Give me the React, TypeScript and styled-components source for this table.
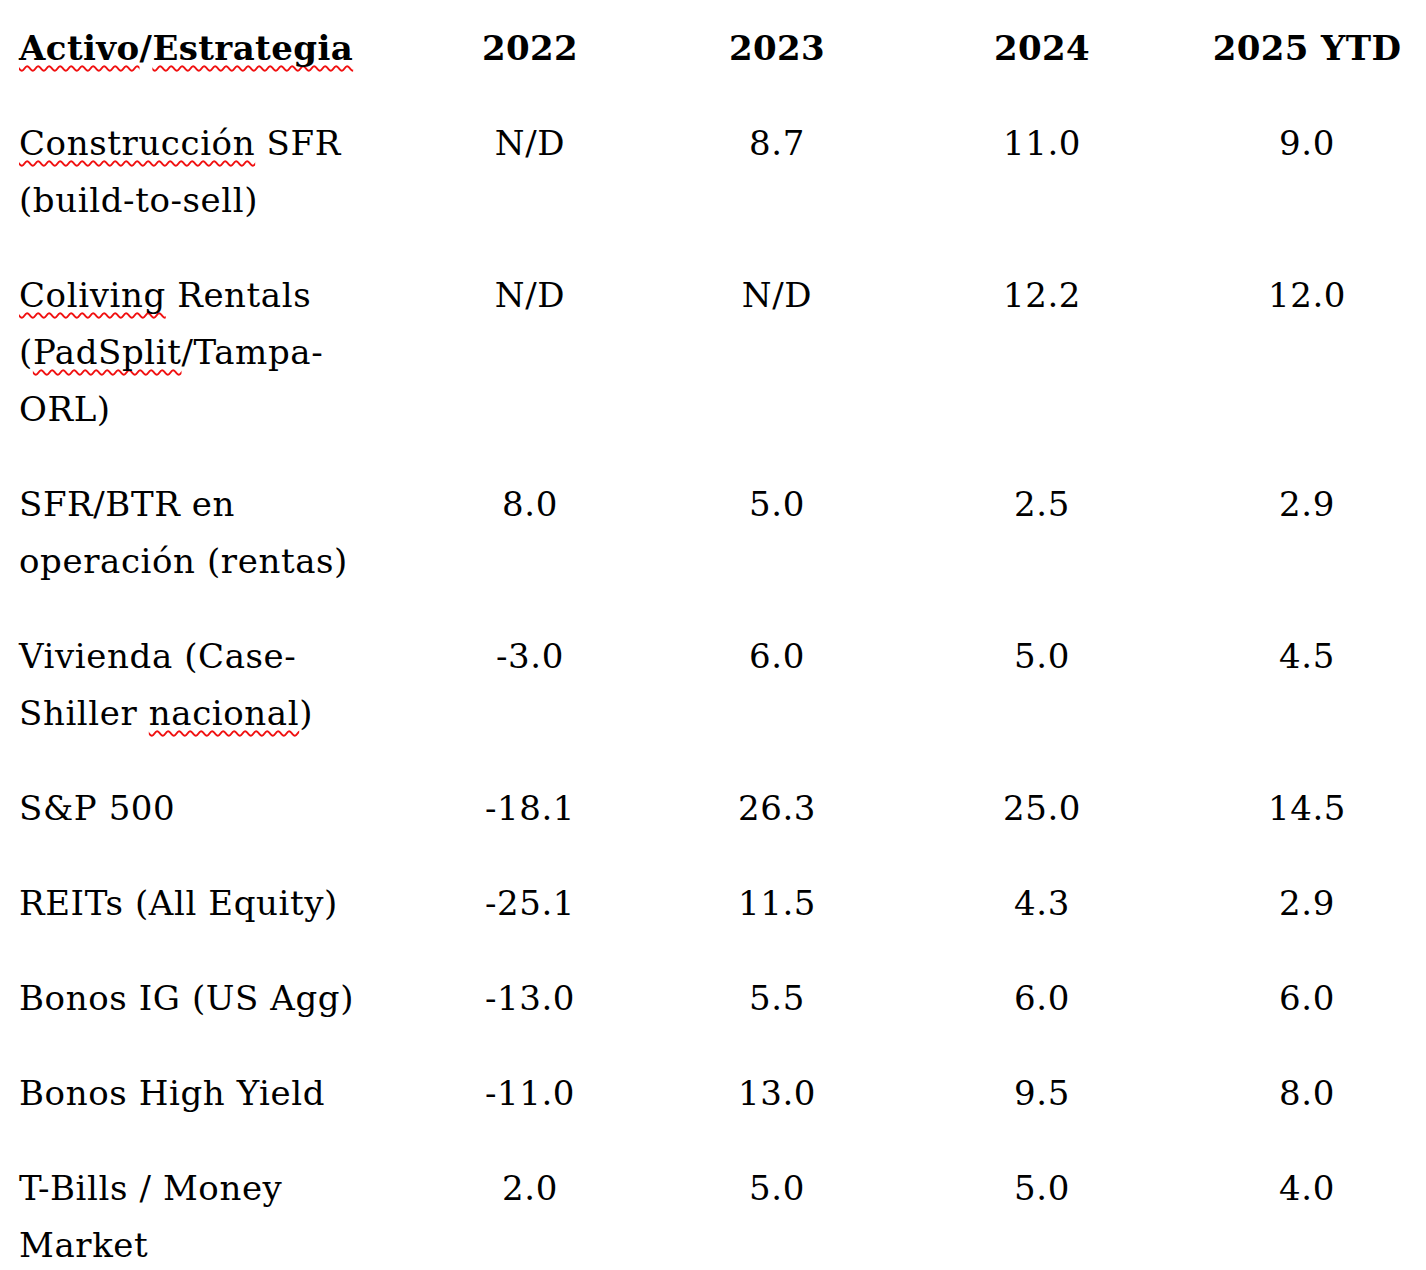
import React from "react";
import styled, { createGlobalStyle } from "styled-components";

const GlobalStyle = createGlobalStyle`
  html, body {
    margin: 0;
    padding: 0;
    background: #ffffff;
  }
  body {
    font-family: "DejaVu Serif", "Liberation Serif", serif;
    color: #000000;
    overflow: hidden;
  }
`;

type Part = string | { typo: string };
type Row = {
  label: Part[][];
  values: string[];
};

const rows: Row[] = [
  {
    label: [[{ typo: "Construcción" }, " SFR"], ["(build-to-sell)"]],
    values: ["N/D", "8.7", "11.0", "9.0"],
  },
  {
    label: [
      [{ typo: "Coliving" }, " Rentals"],
      ["(", { typo: "PadSplit" }, "/Tampa-"],
      ["ORL)"],
    ],
    values: ["N/D", "N/D", "12.2", "12.0"],
  },
  {
    label: [["SFR/BTR en"], ["operación (rentas)"]],
    values: ["8.0", "5.0", "2.5", "2.9"],
  },
  {
    label: [["Vivienda (Case-"], ["Shiller ", { typo: "nacional" }, ")"]],
    values: ["-3.0", "6.0", "5.0", "4.5"],
  },
  { label: [["S&P 500"]], values: ["-18.1", "26.3", "25.0", "14.5"] },
  { label: [["REITs (All Equity)"]], values: ["-25.1", "11.5", "4.3", "2.9"] },
  { label: [["Bonos IG (US Agg)"]], values: ["-13.0", "5.5", "6.0", "6.0"] },
  { label: [["Bonos High Yield"]], values: ["-11.0", "13.0", "9.5", "8.0"] },
  {
    label: [["T-Bills / Money"], ["Market"]],
    values: ["2.0", "5.0", "5.0", "4.0"],
  },
];

const Table = styled.div`
  display: grid;
  grid-template-columns: 410px 240px 254px 276px 246px;
  width: 1426px;
`;

const Cell = styled.div<{ $align: "left" | "center"; $bold?: boolean; $shift?: number }>`
  padding-top: 20px;
  padding-bottom: 18px;
  padding-left: ${({ $align, $shift }) =>
    $align === "left" ? "19px" : `${$shift ?? 0}px`};
  text-align: ${({ $align }) => $align};
  font-size: 34px;
  letter-spacing: ${({ $bold }) => ($bold ? "0.4px" : "0.6px")};
  line-height: 57px;
  font-weight: ${({ $bold }) => ($bold ? 700 : 400)};
`;

const Line = styled.div`
  white-space: nowrap;
`;

const Typo = styled.span`
  text-decoration-line: underline;
  text-decoration-style: wavy;
  text-decoration-color: #f01010;
  text-decoration-thickness: 1.5px;
  text-underline-offset: 5px;
  text-decoration-skip-ink: none;
`;

const headers = ["2022", "2023", "2024", "2025 YTD"];

const renderParts = (parts: Part[]) =>
  parts.map((p, i) =>
    typeof p === "string" ? (
      <React.Fragment key={i}>{p}</React.Fragment>
    ) : (
      <Typo key={i}>{p.typo}</Typo>
    )
  );

const App: React.FC = () => {
  return (
    <>
      <GlobalStyle />
      <Table>
        <Cell $align="left" $bold>
          <Line>
            <Typo>Activo</Typo>/<Typo>Estrategia</Typo>
          </Line>
        </Cell>
        {headers.map((h, i) => (
          <Cell key={h} $align="center" $bold $shift={i === 3 ? 8 : 0}>
            <Line>{h}</Line>
          </Cell>
        ))}
        {rows.map((row, r) => (
          <React.Fragment key={r}>
            <Cell $align="left">
              {row.label.map((line, l) => (
                <Line key={l}>{renderParts(line)}</Line>
              ))}
            </Cell>
            {row.values.map((v, i) => (
              <Cell key={i} $align="center" $shift={i === 3 ? 8 : 0}>
                <Line>{v}</Line>
              </Cell>
            ))}
          </React.Fragment>
        ))}
      </Table>
    </>
  );
};

export default App;
